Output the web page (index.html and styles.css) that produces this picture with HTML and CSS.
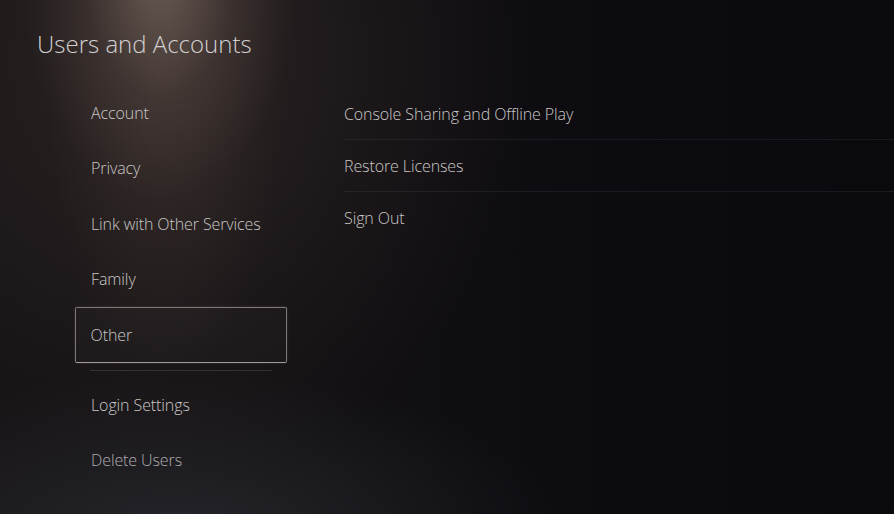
FILE: index.html
```html
<!DOCTYPE html>
<html>
<head>
<meta charset="utf-8">
<link rel="stylesheet" href="styles.css">
</head>
<body>
<div class="screen">
  <h1 class="title">Users and Accounts</h1>
  <div class="content">
    <ul class="menu">
      <li class="menu-item">Account</li>
      <li class="menu-item">Privacy</li>
      <li class="menu-item">Link with Other Services</li>
      <li class="menu-item">Family</li>
      <li class="menu-item selected">Other</li>
      <li class="menu-divider"></li>
      <li class="menu-item">Login Settings</li>
      <li class="menu-item dim">Delete Users</li>
    </ul>
    <ul class="options">
      <li class="option">Console Sharing and Offline Play</li>
      <li class="option">Restore Licenses</li>
      <li class="option last">Sign Out</li>
    </ul>
  </div>
</div>
</body>
</html>
```
FILE: styles.css
```css
html, body {
  margin: 0;
  padding: 0;
  width: 894px;
  height: 514px;
  overflow: hidden;
}
body {
  font-family: "Open Sans", "Noto Sans", sans-serif;
  background: #0c0b0f;
}
.screen {
  width: 894px;
  height: 514px;
  box-sizing: border-box;
  padding: 27px 0 0 0;
  background:
    radial-gradient(ellipse 140px 230px at 160px -30px, rgba(150,130,118,0.55), rgba(120,100,92,0.18) 55%, rgba(0,0,0,0) 100%),
    radial-gradient(ellipse 120px 300px at 165px 80px, rgba(90,74,66,0.30), rgba(0,0,0,0) 100%),
    radial-gradient(ellipse 360px 420px at 170px 60px, rgba(70,56,52,0.45), rgba(0,0,0,0) 100%),
    radial-gradient(ellipse 380px 160px at 180px 530px, rgba(50,52,60,0.55), rgba(0,0,0,0) 100%),
    linear-gradient(90deg, #161315 0%, #121013 35%, #0c0b10 70%, #0a0a0e 100%);
}
.title {
  margin: 0 0 0 37px;
  font-size: 24px;
  font-weight: 300;
  color: #d2d0d0;
  line-height: 34px;
}
.content {
  display: flex;
  margin-top: 24px;
}
.menu {
  list-style: none;
  margin: 0 0 0 75px;
  padding: 0;
  width: 212px;
}
.menu-item {
  height: 55.5px;
  display: flex;
  align-items: center;
  padding-left: 16px;
  box-sizing: border-box;
  font-size: 16px;
  font-weight: 300;
  color: #c9c7c7;
  letter-spacing: -0.1px;
}
.menu-item.selected {
  height: 56px;
  border: 1.5px solid #7e7976;
  border-bottom-color: #a29c98;
  border-radius: 2px;
  background: rgba(255,255,255,0.02);
  box-shadow: 0 0 3px rgba(180,170,160,0.2);
  padding-left: 14.5px;
}
.menu-item.dim {
  color: #aeadb0;
}
.menu-divider {
  height: 1px;
  margin: 7px 15px 6px 15px;
  background: rgba(120,120,130,0.3);
}
.options {
  list-style: none;
  margin: 3px 0 0 57px;
  padding: 0;
  flex: 1;
}
.option {
  height: 51px;
  display: flex;
  align-items: center;
  font-size: 16px;
  font-weight: 300;
  color: #c9c7c7;
  letter-spacing: -0.1px;
  border-bottom: 1px solid rgba(90,90,100,0.2);
}
.option.last {
  border-bottom: none;
}
```
